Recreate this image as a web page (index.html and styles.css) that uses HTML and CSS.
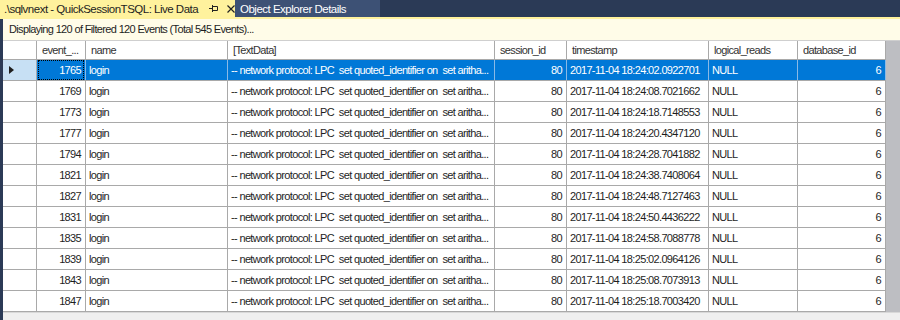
FILE: index.html
```html
<!DOCTYPE html>
<html lang="en">
<head>
  <meta charset="UTF-8">
  <title>QuickSessionTSQL: Live Data</title>
  <link rel="stylesheet" href="styles.css">
</head>
<body>

  <div class="tabs">
    <div class="tab active">
      <span>.\sqlvnext - QuickSessionTSQL: Live Data</span>
      <svg class="pin" width="9" height="9" viewBox="0 0 9 9">
        <path d="M0 4.5H3.5M3.5 1V8M3.5 2.5H8.5V6.5H3.5" fill="none" stroke="#222" stroke-width="1"/>
      </svg>
      <svg class="close" width="8" height="8" viewBox="0 0 8 8">
        <path d="M0.5 0.5L7.5 7.5M7.5 0.5L0.5 7.5" stroke="#222" stroke-width="1.2"/>
      </svg>
    </div>
    <div class="tab">Object Explorer Details</div>
  </div>

  <div class="panel">
    <div class="infobar">Displaying 120 of Filtered 120 Events (Total 545 Events)...</div>

    <div class="grid-area">
      <div class="grid">
        <div class="row head">
          <div class="cell"></div>
          <div class="cell">event_...</div>
          <div class="cell">name</div>
          <div class="cell">[TextData]</div>
          <div class="cell">session_id</div>
          <div class="cell">timestamp</div>
          <div class="cell">logical_reads</div>
          <div class="cell">database_id</div>
        </div>
        <div id="rows"></div>
      </div>
      <div class="vscroll"></div>
    </div>

    <div class="hscroll"></div>
  </div>

  <script>
    // events shown in the live data grid
    const events = [
      [1765, '02.0922701'], [1769, '08.7021662'], [1773, '18.7148553'],
      [1777, '20.4347120'], [1794, '28.7041882'], [1821, '38.7408064'],
      [1827, '48.7127463'], [1831, '50.4436222'], [1835, '58.7088778'],
      [1839, '25:02.0964126'], [1843, '25:08.7073913'], [1847, '25:18.7003420']
    ];

    const rows = document.getElementById('rows');
    events.forEach((ev, i) => {
      const time = ev[1].includes(':') ? '18:' + ev[1] : '18:24:' + ev[1];
      const row = document.createElement('div');
      row.className = 'row' + (i === 0 ? ' selected' : '');
      row.innerHTML =
        '<div class="cell rh">' + (i === 0 ? '<span class="arrow"></span>' : '') + '</div>' +
        '<div class="cell num"><span class="focus">' + ev[0] + '</span></div>' +
        '<div class="cell">login</div>' +
        '<div class="cell text">-- network protocol: LPC  set quoted_identifier on  set aritha...</div>' +
        '<div class="cell num">80</div>' +
        '<div class="cell">2017-11-04 ' + time + '</div>' +
        '<div class="cell">NULL</div>' +
        '<div class="cell num">6</div>';
      rows.appendChild(row);
    });
  </script>
</body>
</html>
```

FILE: styles.css
```css
* {
  margin: 0;
  padding: 0;
  box-sizing: border-box;
}

body {
  width: 900px;
  height: 320px;
  overflow: hidden;
  background-color: #2b3a56;
  font-family: 'Liberation Sans', Arial, sans-serif;
  font-size: 11px;
  letter-spacing: -0.65px;
  color: #1e1e1e;
}

/* Document tabs */
.tabs {
  display: flex;
  height: 19px;
  border-bottom: 2px solid #fff29d;
}

.tab {
  display: flex;
  align-items: center;
  height: 17px;
  padding: 0 6px 0 5px;
  background-color: #3d5175;
  color: #fff;
  font-size: 11.5px;
  letter-spacing: -0.5px;
  white-space: nowrap;
  width: 145px;
}

.tab.active {
  width: 235px;
  padding-left: 4px;
  background-color: #fff29d;
  color: #1e1e1e;
}

.tab .pin {
  margin-left: 11px;
  flex-shrink: 0;
}

.tab .close {
  margin-left: 9px;
  flex-shrink: 0;
}

/* Content panel */
.panel {
  margin-left: 3px;
  height: 301px;
  display: flex;
  flex-direction: column;
  background-color: #efefef;
}

.infobar {
  height: 22px;
  line-height: 21px;
  padding-left: 6px;
  background-color: #fffce8;
  border-bottom: 1px solid #cfcfcf;
}

.grid-area {
  display: flex;
  height: 271px;
}

.grid {
  width: 883px;
  background-color: #fff;
}

.vscroll {
  flex: 1;
  background-color: #bdbec2;
}

.hscroll {
  flex: 1;
  border-top: 1px solid #d8d8d8;
  background-color: #efefef;
}

/* Rows and cells */
.row {
  display: grid;
  grid-template-columns: 34px 49px 142px 267px 72px 142px 89px 88px;
  height: 21px;
  border-bottom: 1px solid #a9a9a9;
}

.row.head {
  height: 19px;
  color: #333;
}

.cell {
  border-right: 1px solid #a9a9a9;
  padding: 0 3px;
  line-height: 20px;
  white-space: pre;
  overflow: hidden;
}

.head .cell {
  padding-left: 5px;
  line-height: 18px;
}

.cell.num {
  text-align: right;
  padding-right: 4px;
}

.cell.rh {
  padding: 0;
}

.selected .cell {
  background-color: #0078d7;
  color: #fff;
  border-right-color: #8ab9e6;
}

.selected .cell.rh {
  background-color: #c7e0f4;
  border-right-color: #a9a9a9;
}

.selected .focus {
  display: block;
  margin: 0 -3px 0 -2px;
  padding-right: 2px;
  height: 20px;
  line-height: 18px;
  border: 1px dotted #000;
  color: #fff;
}

.arrow {
  display: block;
  width: 0;
  height: 0;
  margin: 6px 0 0 6px;
  border-top: 4px solid transparent;
  border-bottom: 4px solid transparent;
  border-left: 5px solid #1e1e1e;
}
```
